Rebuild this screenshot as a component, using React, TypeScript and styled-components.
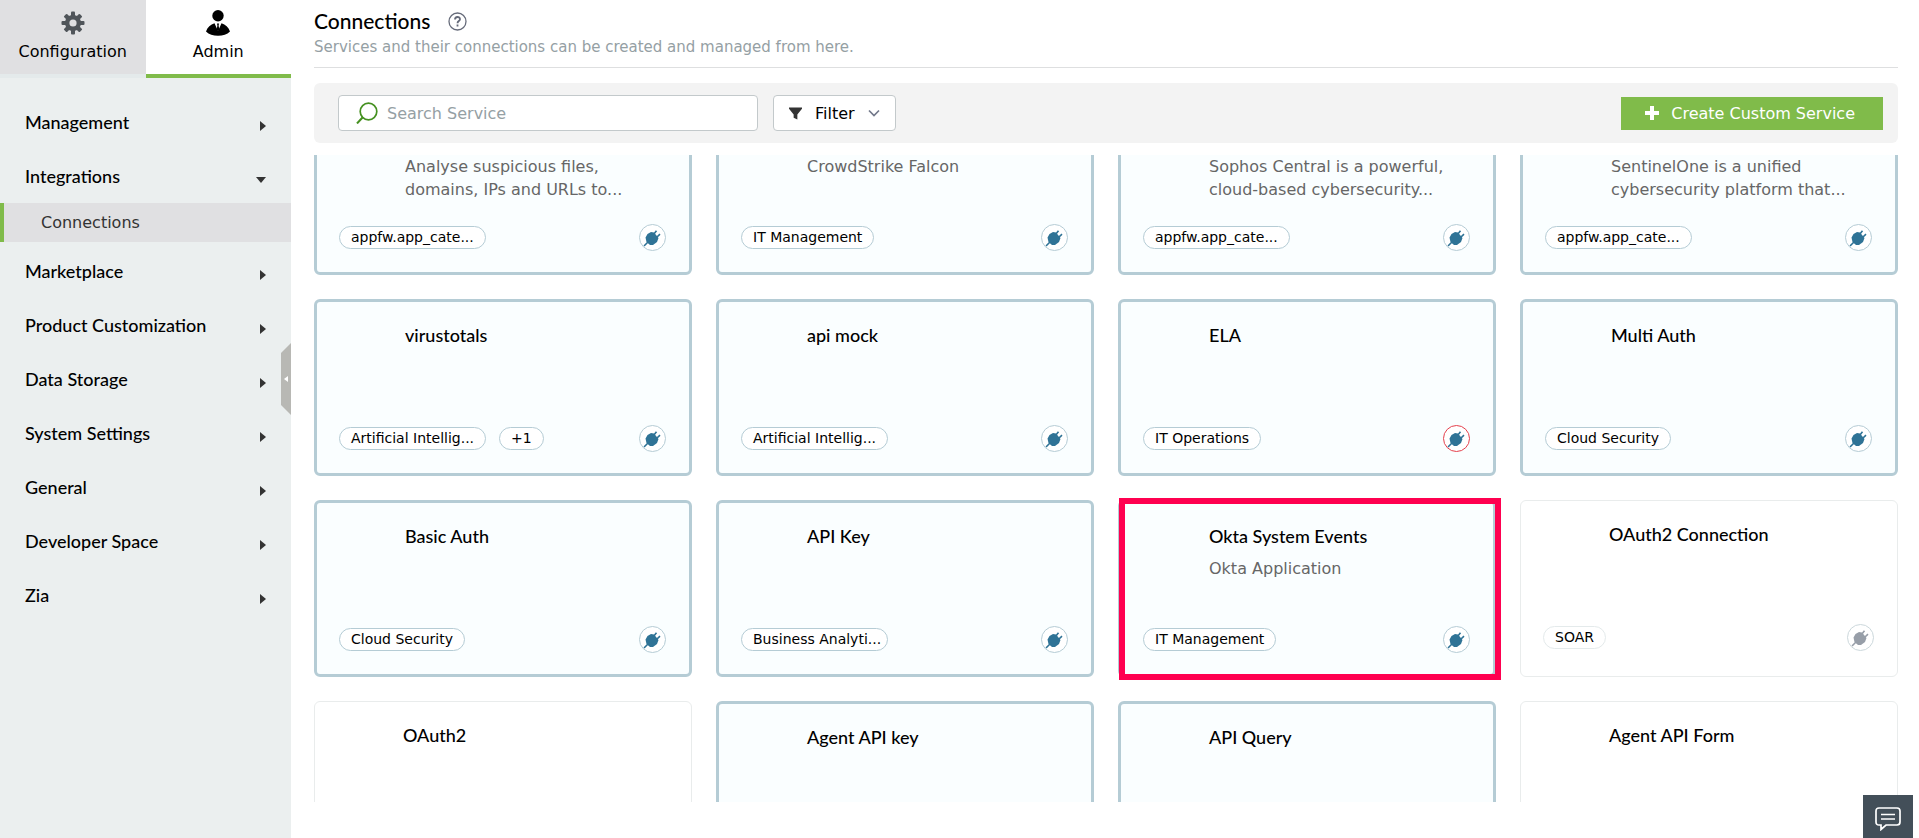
import React, { useLayoutEffect, useRef } from "react";
import styled, { createGlobalStyle, css } from "styled-components";

const verdana = `Verdana, "DejaVu Sans", sans-serif`;
const lato = `Lato, sans-serif`;
const green = "#80bb4a";

const GlobalStyle = createGlobalStyle`
  *, *::before, *::after { box-sizing: border-box; }
  body { margin: 0; background: #fff; color: #000; font: 16px/23px ${verdana}; }
  button, input { font: inherit; color: inherit; }
  h1, h2, p, ul { margin: 0; padding: 0; }
  ul { list-style: none; }
`;

const Page = styled.div`
  display: grid;
  grid-template-columns: 291px minmax(0, 1fr);
  height: 100vh;
  overflow: hidden;
`;

const Sidebar = styled.aside`
  position: relative;
  background: #ebefef;
`;

const Tabs = styled.div`
  display: grid;
  grid-template-columns: 1fr 1fr;
  height: 78px;
`;

const Tab = styled.button<{ $active?: boolean }>`
  display: flex;
  flex-direction: column;
  align-items: center;
  gap: 4px;
  padding: 10px 0 0;
  border: 0;
  border-bottom: 4px solid ${(p) => (p.$active ? green : "#e4eaeb")};
  background: ${(p) => (p.$active ? "#fff" : "#e0e0e2")};
`;

const Menu = styled.nav`
  padding-top: 17px;
`;

const MenuItem = styled.button`
  display: flex;
  align-items: center;
  justify-content: space-between;
  width: 100%;
  height: 54px;
  padding: 0 25px;
  border: 0;
  background: none;
  font-family: ${lato};
  font-size: 18px;
  font-weight: 500;
  text-align: left;
`;

const Arrow = styled.span<{ $open?: boolean }>`
  margin-top: 8px;
  border: 5px solid transparent;
  ${(p) =>
    p.$open
      ? css`border-top: 6px solid #333; border-bottom: 0;`
      : css`border-left: 6px solid #333; border-right: 0;`}
`;

const SubItem = styled.a`
  display: block;
  height: 39px;
  margin-bottom: 2px;
  padding-left: 37px;
  border-left: 4px solid ${green};
  background: #e0e0e2;
  color: #333;
  line-height: 39px;
  text-decoration: none;
`;

const Collapse = styled.button`
  position: absolute;
  top: 343px;
  right: 0;
  width: 10px;
  height: 72px;
  padding: 0;
  border: 0;
  background: #b8b8b4;
  clip-path: polygon(100% 0, 0 10px, 0 62px, 100% 100%);
  svg { display: block; margin-left: 3px; }
`;

const Main = styled.main`
  display: flex;
  flex-direction: column;
  min-height: 0;
  padding: 0 21px 36px 23px;
`;

const Header = styled.header`
  height: 68px;
  padding-top: 6px;
  border-bottom: 1px solid #dedfe0;
`;

const TitleRow = styled.div`
  display: flex;
  align-items: center;
  gap: 18px;
  height: 30px;
`;

const Heading = styled.h1`
  font: 500 21px/30px ${lato};
`;

const HelpButton = styled.button`
  display: flex;
  padding: 0;
  border: 0;
  background: none;
`;

const Subtitle = styled.p`
  color: #95a0a4;
  font-size: 15px;
`;

const Toolbar = styled.div`
  display: flex;
  align-items: center;
  gap: 15px;
  height: 60px;
  margin: 15px 0 12px;
  padding: 0 15px 0 24px;
  border-radius: 6px;
  background: #f3f3f3;
`;

const SearchBox = styled.label`
  display: flex;
  align-items: center;
  gap: 9px;
  width: 420px;
  height: 36px;
  padding-left: 17px;
  border: 1px solid #c3c9cb;
  border-radius: 4px;
  background: #fff;
`;

const SearchInput = styled.input`
  flex: 1;
  min-width: 0;
  padding: 0;
  border: 0;
  outline: 0;
  background: none;
  &::placeholder { color: #95a0a4; opacity: 1; }
`;

const FilterButton = styled.button`
  display: flex;
  align-items: center;
  gap: 13px;
  height: 36px;
  padding: 0 15px;
  border: 1px solid #c3c9cb;
  border-radius: 4px;
  background: #fff;
`;

const CreateButton = styled.button`
  display: flex;
  align-items: center;
  gap: 12px;
  height: 33px;
  margin-left: auto;
  padding: 0 28px 0 24px;
  border: 0;
  background: ${green};
  color: #fff;
`;

const List = styled.ul`
  display: grid;
  flex: 1;
  grid-template-columns: repeat(4, minmax(0, 1fr));
  grid-auto-rows: 177px;
  gap: 24px;
  min-height: 0;
  overflow-y: auto;
  scrollbar-width: none;
`;

const Card = styled.li<{ $connected: boolean }>`
  position: relative;
  display: flex;
  flex-direction: column;
  justify-content: space-between;
  padding: ${(p) => (p.$connected ? "22px 23px 23px 22px" : "22px 23px 27px 22px")};
  border: ${(p) => (p.$connected ? "3px solid #b5ccd5" : "1px solid #e9ecec")};
  border-radius: 6px;
  background: ${(p) => (p.$connected ? "#fafeff" : "#fff")};
`;

const Highlight = styled.span`
  position: absolute;
  inset: -5px -8px -6px -2px;
  border: 6px solid #ff0050;
  pointer-events: none;
`;

const CardText = styled.div`
  padding-left: 66px;
`;

const CardTitle = styled.h2`
  height: 23px;
  margin-bottom: 9px;
  font: 500 18px/23px ${lato};
`;

const Description = styled.p`
  color: #666;
`;

const CardFooter = styled.div`
  display: flex;
  align-items: center;
  gap: 13px;
  height: 23px;
`;

const Tag = styled.span<{ $connected: boolean }>`
  max-width: 147px;
  height: 23px;
  padding: 0 11px;
  overflow: hidden;
  border: 1px solid ${(p) => (p.$connected ? "#b5ccd5" : "#e4eaeb")};
  border-radius: 12px;
  background: #fff;
  font-size: 14px;
  line-height: 20px;
  white-space: nowrap;
`;

const PlugButton = styled.button<{ $tone: Tone }>`
  display: flex;
  align-items: center;
  justify-content: center;
  width: 27px;
  height: 27px;
  flex: none;
  margin-left: auto;
  padding: 0;
  border: 1px solid ${(p) => ({ on: "#b5ccd5", error: "#e5404c", off: "#ccd8dc" })[p.$tone]};
  border-radius: 50%;
  background: #fff;
  color: ${(p) => (p.$tone === "off" ? "#979ea8" : "#2f7396")};
`;

const ChatButton = styled.button`
  position: fixed;
  right: 6px;
  bottom: 0;
  display: flex;
  align-items: center;
  justify-content: center;
  width: 50px;
  height: 43px;
  padding: 4px 0 0;
  border: 0;
  background: #434f59;
`;

type Tone = "on" | "error" | "off";

type Service = {
  title?: string;
  lines?: string[];
  tags?: string[];
  tone?: Tone;
  highlighted?: boolean;
};

const services: Service[] = [
  { lines: ["Analyse suspicious files,", "domains, IPs and URLs to..."], tags: ["appfw.app_cate..."] },
  { lines: ["CrowdStrike Falcon"], tags: ["IT Management"] },
  { lines: ["Sophos Central is a powerful,", "cloud-based cybersecurity..."], tags: ["appfw.app_cate..."] },
  { lines: ["SentinelOne is a unified", "cybersecurity platform that..."], tags: ["appfw.app_cate..."] },
  { title: "virustotals", tags: ["Artificial Intellig...", "+1"] },
  { title: "api mock", tags: ["Artificial Intellig..."] },
  { title: "ELA", tags: ["IT Operations"], tone: "error" },
  { title: "Multi Auth", tags: ["Cloud Security"] },
  { title: "Basic Auth", tags: ["Cloud Security"] },
  { title: "API Key", tags: ["Business Analyti..."] },
  { title: "Okta System Events", lines: ["Okta Application"], tags: ["IT Management"], highlighted: true },
  { title: "OAuth2 Connection", tags: ["SOAR"], tone: "off" },
  { title: "OAuth2", tone: "off" },
  { title: "Agent API key" },
  { title: "API Query" },
  { title: "Agent API Form", tone: "off" },
];

const menuBefore = ["Management"];
const menuAfter = ["Marketplace", "Product Customization", "Data Storage", "System Settings", "General", "Developer Space", "Zia"];

const GearIcon = () => (
  <svg width="24" height="26" viewBox="-12 -13 24 26" fill="#50555a">
    {[0, 90].map((a) => (
      <rect key={a} x="-2" y="-11.5" width="4" height="23" rx="1" transform={`rotate(${a})`} />
    ))}
    {[45, 135].map((a) => (
      <rect key={a} x="-2.2" y="-11.2" width="4.4" height="22.4" rx="1" transform={`rotate(${a})`} />
    ))}
    <circle r="8" />
    <circle r="3.6" fill="#e0e0e2" />
  </svg>
);

const AdminIcon = () => (
  <svg width="26" height="26" viewBox="0 0 26 26">
    <circle cx="13" cy="5.7" r="5.7" />
    <path d="M1 21.500C2.500 17 5.500 14.500 9.500 13.200L13 21l3.500-7.800c4 1.300 7 3.800 8.500 8.300-3 3-7 4.300-12 4.300S4 24.500 1 21.500z" />
    <path d="M12 13.500h2l-.4 2.200.8 3.800-1.400 2-1.400-2 .8-3.800z" />
  </svg>
);

const PlugIcon = () => (
  <svg width="19" height="19" viewBox="0 0 19 19" aria-hidden="true">
    <path d="M2.500 9.500 4.500 6 8 4l3 .5 4.500 5.500-1.500 4-4 3H7L3.500 14z" fill="currentColor" />
    <path d="M1 18 5 14M10.500 6.500l3-3.800M13.500 9.500l3.500-3.300" fill="none" stroke="currentColor" strokeWidth="1.600" />
  </svg>
);

function ServiceCard({ title, lines = [], tags = [], tone = "on", highlighted }: Service) {
  const connected = tone !== "off";
  return (
    <Card $connected={connected}>
      <CardText>
        <CardTitle>{title}</CardTitle>
        {lines.map((line) => (
          <Description key={line}>{line}</Description>
        ))}
      </CardText>
      {tags.length > 0 && (
        <CardFooter>
          {tags.map((tag) => (
            <Tag key={tag} $connected={connected}>{tag}</Tag>
          ))}
          <PlugButton $tone={tone} aria-label="Connection status">
            <PlugIcon />
          </PlugButton>
        </CardFooter>
      )}
      {highlighted && <Highlight />}
    </Card>
  );
}

export default function App() {
  const listRef = useRef<HTMLUListElement>(null);

  useLayoutEffect(() => {
    if (listRef.current) listRef.current.scrollTop = 57;
  }, []);

  return (
    <>
      <GlobalStyle />
      <Page>
        <Sidebar>
          <Tabs>
            <Tab><GearIcon />Configuration</Tab>
            <Tab $active><AdminIcon />Admin</Tab>
          </Tabs>
          <Menu>
            {menuBefore.map((item) => (
              <MenuItem key={item}>{item}<Arrow /></MenuItem>
            ))}
            <MenuItem aria-expanded="true">Integrations<Arrow $open /></MenuItem>
            <SubItem href="#connections">Connections</SubItem>
            {menuAfter.map((item) => (
              <MenuItem key={item}>{item}<Arrow /></MenuItem>
            ))}
          </Menu>
          <Collapse aria-label="Collapse sidebar">
            <svg width="5" height="6" viewBox="0 0 5 6"><path d="M4 0v6L0 3z" fill="#fff" /></svg>
          </Collapse>
        </Sidebar>
        <Main>
          <Header>
            <TitleRow>
              <Heading>Connections</Heading>
              <HelpButton aria-label="Help">
                <svg width="19" height="19" viewBox="0 0 19 19" fill="none" stroke="#666b7a">
                  <circle cx="9.500" cy="9.500" r="8.500" strokeWidth="1.300" />
                  <path d="M7 7.500c0-3.300 5-3.300 5-.3 0 2-2.500 1.800-2.500 4M9.500 12.500v2" strokeWidth="1.800" />
                </svg>
              </HelpButton>
            </TitleRow>
            <Subtitle>Services and their connections can be created and managed from here.</Subtitle>
          </Header>
          <Toolbar>
            <SearchBox>
              <svg width="22" height="22" viewBox="0 0 22 22" fill="none" stroke="#459020" strokeWidth="1.700">
                <circle cx="12.500" cy="9.500" r="8.300" />
                <path d="M6.500 15.500 1 21.500" strokeWidth="2" />
              </svg>
              <SearchInput type="text" placeholder="Search Service" aria-label="Search Service" />
            </SearchBox>
            <FilterButton>
              <svg width="13" height="13" viewBox="0 0 14 13"><path d="M0 0h14v1.500L9 7.500V13L5 11V7.500L0 1.500z" fill="#333" /></svg>
              Filter
              <svg width="12" height="8" viewBox="0 0 12 8"><path d="M1 1.500 6 6.500 11 1.500" fill="none" stroke="#72788a" strokeWidth="1.700" /></svg>
            </FilterButton>
            <CreateButton>
              <svg width="14" height="14" viewBox="0 0 14 14"><path d="M5 0h4v5h5v4H9v5H5V9H0V5h5z" fill="#fff" /></svg>
              Create Custom Service
            </CreateButton>
          </Toolbar>
          <List ref={listRef}>
            {services.map((service, i) => (
              <ServiceCard key={i} {...service} />
            ))}
          </List>
        </Main>
      </Page>
      <ChatButton aria-label="Open chat">
        <svg width="26" height="24" viewBox="0 0 26 24" fill="none" stroke="#fff" strokeWidth="1.700">
          <path d="M4 1h18q3 0 3 3v11q0 3-3 3H11l-5 4.500V18H4q-3 0-3-3V4q0-3 3-3zM6 7.500h14M6 12h14" />
        </svg>
      </ChatButton>
    </>
  );
}
